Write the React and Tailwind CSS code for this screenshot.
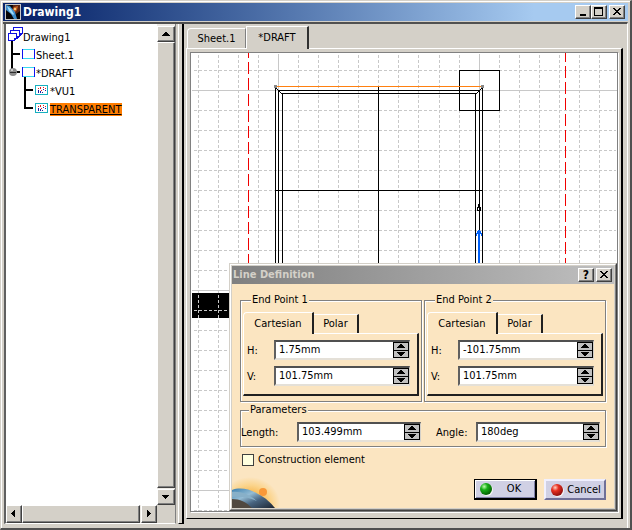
const raised =
  "border border-t-white border-l-white border-r-[#404040] border-b-[#404040] bg-[#d4d0c8] shadow-[inset_-1px_-1px_0_#808080]";

const range = (from, to, step) => {
  const out = [];
  for (let v = from; v <= to; v += step) out.push(v);
  return out;
};

function CaptionButton({ label, children }) {
  return (
    <button aria-label={label} className={`flex h-[14px] w-4 items-center justify-center ${raised}`}>
      <svg width="10" height="10" shapeRendering="crispEdges">{children}</svg>
    </button>
  );
}

const closeGlyph = (
  <path d="M1 1h2v1h1v1h2v-1h1v-1h2v1h-1v1h-1v1h-1v1h1v1h1v1h1v1h-2v-1h-1v-1h-2v1h-1v1h-2v-1h1v-1h1v-1h1v-1h-1v-1h-1v-1h-1z" />
);

function TitleBar() {
  return (
    <header className="mx-[2px] flex h-[18px] shrink-0 items-center bg-linear-to-r from-[#0a246a] from-5% to-[#a6caf0] to-85% pr-[3px] pl-[2px]">
      <svg width="16" height="16" viewBox="0 0 16 16" aria-hidden="true">
        <rect width="16" height="16" fill="#c8c8c8" />
        <rect x="1" y="1" width="14" height="14" fill="#080404" />
        <path d="M8 1h7v6l-4 3-4-4z" fill="#5a2410" />
        <path d="M9 3l4-1-1 4-3 3-2-2z" fill="#c86420" />
        <path d="M1 1l4 1 5 6 2 7h-3l-3-5-5-4z" fill="#3c8ccc" />
        <path d="M2 2l4 3 3 5-1 1-4-4z" fill="#a0dcf8" />
        <circle cx="10" cy="5" r="1" fill="#ffe8a0" />
      </svg>
      <h1 className="ml-[2px] flex-1 text-xs font-bold text-white">Drawing1</h1>
      <div className="flex">
        <CaptionButton label="Minimize"><rect x="2" y="7" width="6" height="2" /></CaptionButton>
        <CaptionButton label="Maximize"><path fillRule="evenodd" d="M0 0h9v9h-9zM1 2v6h7v-6z" /></CaptionButton>
        <span className="w-[2px]" />
        <CaptionButton label="Close">{closeGlyph}</CaptionButton>
      </div>
    </header>
  );
}

function SheetIcon({ x, y, view }) {
  return (
    <g transform={`translate(${x} ${y})`}>
      <rect width="13" height="10" fill="#fff" />
      <path d="M0 0h13v1h-13zM0 9h13v1h-13z" fill="#38d8f0" />
      <path d="M0 0h1v10h-1zM12 0h1v10h-1z" fill="#1010f0" />
      {view && (
        <>
          <path d="M0 0h13v1h-13zM0 9h13v1h-13zM0 1h1v8h-1zM12 1h1v8h-1z" fill="#18b0c0" />
          <path d="M3 3h1v1h-1zM5 2h1v2h-1zM8 2h1v1h-1zM10 3h1v1h-1zM6 5h1v1h-1z" fill="#e02020" />
          <path d="M3 5h1v3h-1zM5 6h1v2h-1zM8 4h1v1h-1zM7 7h1v1h-1zM10 5h1v1h-1z" fill="#2020a0" />
        </>
      )}
    </g>
  );
}

function TreeRow({ width, icon, children }) {
  return (
    <li className="flex h-[18px] items-center">
      <svg className={`${width} h-[18px] shrink-0 overflow-visible`} shapeRendering="crispEdges" aria-hidden="true">{icon}</svg>
      <span className="pt-[2px]">{children}</span>
    </li>
  );
}

function Tree() {
  return (
    <ul className="flex-1 bg-white pt-1">
      <TreeRow
        width="w-[17px]"
        icon={
          <>
            <rect x="5" y="12" width="2" height="6" />
            <g fill="#fff" stroke="#1010e0">
              <path d="M7.500 -.5h9v6l-2 2h-7z" />
              <path d="M4.500 2.500h9v6l-2 2h-7z" />
              <path d="M2.500 5.500h8v5l-2 2h-6z" />
              <path d="M16.500 5.500h-2v2M13.500 8.500h-2v2M10.500 10.500h-2v2" fill="none" />
            </g>
          </>
        }
      >
        Drawing1
      </TreeRow>
      <TreeRow
        width="w-[30px]"
        icon={
          <>
            <path d="M5 0h2v18h-2zM7 7h7v2h-7z" />
            <SheetIcon x={16} y={3} />
          </>
        }
      >
        Sheet.1
      </TreeRow>
      <TreeRow
        width="w-[30px]"
        icon={
          <>
            <path d="M5 0h2v6h-2zM7 7h7v2h-7zM18 13h2v5h-2z" />
            <circle cx="7" cy="8" r="4" fill="#8c8c8c" shapeRendering="auto" />
            <circle cx="6" cy="6" r="1" fill="#e0e0e0" shapeRendering="auto" />
            <rect x="4" y="8" width="6" height="1" fill="#303030" />
            <SheetIcon x={16} y={3} />
          </>
        }
      >
        *DRAFT
      </TreeRow>
      <TreeRow
        width="w-[44px]"
        icon={
          <>
            <path d="M18 0h2v18h-2zM20 7h7v2h-7z" />
            <SheetIcon x={29} y={3} view />
          </>
        }
      >
        *VU1
      </TreeRow>
      <TreeRow
        width="w-[44px]"
        icon={
          <>
            <path d="M18 0h2v9h-2zM20 7h7v2h-7z" />
            <SheetIcon x={29} y={3} view />
          </>
        }
      >
        <span className="bg-[#ff7d00] underline underline-offset-1">TRANSPARENT</span>
      </TreeRow>
    </ul>
  );
}

function ScrollButton({ label, d, size }) {
  return (
    <button aria-label={label} className={`flex shrink-0 items-center justify-center ${size} ${raised}`}>
      <svg width="8" height="8" shapeRendering="crispEdges"><path d={d} /></svg>
    </button>
  );
}

function TreePanel() {
  return (
    <aside className="mb-[4px] ml-px flex w-[172px] shrink-0 flex-col border-r border-b border-l-2 border-r-[#808080] border-b-white border-l-[#606060]">
      <div className="flex min-h-0 flex-1">
        <Tree />
        <div className="flex w-[18px] flex-col bg-[#ece9e4] pt-[2px]">
          <ScrollButton label="Scroll up" d="M3 2h2v1h1v1h1v1h1v1h-8v-1h1v-1h1v-1h1z" size="h-4" />
          <div className={`mb-px flex-1 ${raised}`} />
          <ScrollButton label="Scroll down" d="M0 2h7v1h-1v1h-1v1h-1v1h-1v-1h-1v-1h-1v-1h-1z" size="h-4" />
        </div>
      </div>
      <div className="flex h-[18px] bg-[#ece9e4]">
        <ScrollButton label="Scroll left" d="M5 0v7h-1v-1h-1v-1h-1v-1h-1v-1h1v-1h1v-1h1v-1z" size="w-4" />
        <div className={`mr-px flex-1 ${raised}`} />
        <ScrollButton label="Scroll right" d="M2 0v7h1v-1h1v-1h1v-1h1v-1h-1v-1h-1v-1h-1v-1z" size="w-4" />
        <div className="w-[18px] bg-[#d4d0c8]" />
      </div>
    </aside>
  );
}

function Drawing() {
  return (
    <svg className="absolute inset-0 h-full w-full" shapeRendering="crispEdges" role="img" aria-label="Draft drawing">
      <g transform="translate(-191 -53)">
        <rect x="192" y="293" width="60" height="25" />
        <g stroke="#c8c8c8" strokeDasharray="3 2">
          {[...range(198, 418, 20), ...range(439, 599, 20)].map((x) => (
            <line key={x} x1={x + 0.5} x2={x + 0.5} y1="55" y2="511" />
          ))}
          {range(70, 510, 20).map((y) => (
            <line key={y} x1="194" x2="616" y1={y + 0.5} y2={y + 0.5} />
          ))}
        </g>
        <path d="M278.500 54V91M479.500 54V91M192 90.500H617M192 290.500H617M192 490.500H617" stroke="#c8c8c8" />
        <path d="M248.500 46V263M565.500 50V263" stroke="#f00000" strokeDasharray="12 4" />
        <g fill="none" stroke="#000">
          <path d="M275.500 88V270M278.500 90V270M282.500 93V270M475.500 93V270M479.500 90V270M482.500 88V270" />
          <path d="M278 90.500H480M282 93.500H476M378.500 87V270M276 190.500H483M275 87l7 7M483 87l-7 7" />
          <rect x="459.500" y="70.500" width="40" height="40" />
          <path d="M477.500 210.500v-3h1v-3h1v3h1v3z" />
        </g>
        <path d="M275 86.500H483" stroke="#ff8010" />
        <path d="M274 85h3v3h-3zM481 85h3v3h-3z" fill="#888" />
        <path d="M478 270v-36h-1v2h-1v-3h1v-2h1v-1h2v1h1v2h1v3h-1v-2h-1v36z" fill="#0060f8" />
      </g>
    </svg>
  );
}

function SpinField({ id, value }) {
  return (
    <div className="flex h-5 min-w-0 flex-1 border-t-2 border-r border-b-2 border-l-2 border-t-[#505050] border-r-[#d4d0c8] border-b-[#e4e0d8] border-l-[#606060] bg-white">
      <input id={id} defaultValue={value} className="w-0 min-w-0 flex-1 bg-transparent pb-px pl-[3px] leading-3 outline-none" />
      <div className="flex w-4 flex-col border border-black bg-[#c0c0c0]">
        <button aria-label="Increase" className="flex flex-1 items-center justify-center border-b border-black">
          <svg width="8" height="4" shapeRendering="crispEdges"><path d="M3 0h2v1h1v1h1v1h1v1h-8v-1h1v-1h1v-1h1z" /></svg>
        </button>
        <button aria-label="Decrease" className="flex flex-1 items-center justify-center">
          <svg width="8" height="4" shapeRendering="crispEdges"><path d="M0 0h8v1h-1v1h-1v1h-1v1h-2v-1h-1v-1h-1v-1h-1z" /></svg>
        </button>
      </div>
    </div>
  );
}

function Group({ title, className, children }) {
  return (
    <fieldset className={`min-w-0 border border-[#808080] shadow-[1px_1px_0_#fff,inset_1px_1px_0_#fff] ${className}`}>
      <legend className="ml-2 h-[14px] bg-[#fbe5c1] px-px leading-[14px]">{title}</legend>
      {children}
    </fieldset>
  );
}

function EndPoint({ n, h, v }) {
  return (
    <Group title={`End Point ${n}`} className="px-[2px] pt-[5px] pb-[5px]">
      <div role="tablist" className="flex items-end">
        <button role="tab" aria-selected="true" className="relative z-10 -mb-px h-[22px] w-[71px] rounded-tl-sm border-t border-r-2 border-l border-t-white border-r-[#202020] border-l-white bg-[#fbe5c1]">
          Cartesian
        </button>
        <button role="tab" aria-selected="false" className="h-[19px] w-[45px] border-t border-r-2 border-t-white border-r-[#202020]">
          Polar
        </button>
      </div>
      <div className="flex flex-col gap-[6px] border-t border-r-2 border-b-2 border-l border-t-white border-r-[#202020] border-b-[#202020] border-l-white pt-[6px] pr-[7px] pb-2 pl-[3px]">
        <div className="flex">
          <label htmlFor={`h${n}`} className="w-[27px] pt-[5px] leading-3">H:</label>
          <SpinField id={`h${n}`} value={h} />
        </div>
        <div className="flex">
          <label htmlFor={`v${n}`} className="w-[27px] pt-[5px] leading-3">V:</label>
          <SpinField id={`v${n}`} value={v} />
        </div>
      </div>
    </Group>
  );
}

function ActionButton({ label, gradient, stops, rim }) {
  return (
    <button className={`flex h-[21px] items-center bg-[#d0d0e4] ${rim}`}>
      <svg width="14" height="14" className="ml-1 shrink-0" aria-hidden="true">
        <radialGradient id={gradient} cx="0.35" cy="0.3" r="0.7">
          <stop offset="0" stopColor={stops[0]} />
          <stop offset="0.4" stopColor={stops[1]} />
          <stop offset="1" stopColor={stops[2]} />
        </radialGradient>
        <circle cx="8" cy="8" r="6" fill="#f4f4f4" />
        <circle cx="7" cy="7" r="6" fill={`url(#${gradient})`} />
      </svg>
      <span className="flex-1 text-center">{label}</span>
    </button>
  );
}

function LineDialog() {
  return (
    <section
      role="dialog"
      aria-label="Line Definition"
      className="absolute top-[210px] right-0 left-[38px] border border-t-[#d4d0c8] border-r-[#404040] border-b-[#404040] border-l-[#d4d0c8]"
    >
      <div className="border border-t-white border-r-[#808080] border-b-[#808080] border-l-white bg-[#d4d0c8] p-px">
        <header className="flex h-[18px] items-center bg-linear-to-r from-[#808080] to-[#c0c0c0] pr-[2px] pl-px">
          <h2 className="flex-1 font-bold text-[#d4d0c8]">Line Definition</h2>
          <div className="flex gap-[2px]">
            <button aria-label="Help" className={`flex h-[14px] w-4 items-center justify-center text-xs leading-3 font-bold ${raised}`}>?</button>
            <CaptionButton label="Close">{closeGlyph}</CaptionButton>
          </div>
        </header>
        <form className="relative bg-[#fbe5c1] px-2 pt-[9px] pb-2" onSubmit={(e) => e.preventDefault()}>
          <svg className="absolute bottom-0 left-0" width="50" height="36" viewBox="0 0 50 36" aria-hidden="true">
            <defs>
              <radialGradient id="glow">
                <stop offset="0.4" stopColor="#f8b850" />
                <stop offset="0.7" stopColor="#fbd48c" />
                <stop offset="1" stopColor="#fbe5c1" />
              </radialGradient>
              <linearGradient id="earth" x1="0" y1="0" x2="1" y2="1">
                <stop offset="0" stopColor="#3c80b0" />
                <stop offset="0.35" stopColor="#94bcd4" />
                <stop offset="0.6" stopColor="#486480" />
                <stop offset="1" stopColor="#1c2430" />
              </linearGradient>
            </defs>
            <ellipse cx="18" cy="32" rx="30" ry="27" fill="url(#glow)" />
            <circle cx="31" cy="20" r="4" fill="#f89838" />
            <path d="M0 18c8-3 18-1 26 4 8 4 13 9 17 14H0z" fill="url(#earth)" />
            <path d="M0 20c9-1 18 3 25 9-8-4-16-5-25-4z" fill="#88b0c8" />
            <path d="M0 27c8 0 14 3 20 9H0z" fill="#504840" />
          </svg>
          <div className="grid grid-cols-2 gap-[2px]">
            <EndPoint n="1" h="1.75mm" v="101.75mm" />
            <EndPoint n="2" h="-101.75mm" v="101.75mm" />
          </div>
          <Group title="Parameters" className="mt-px pt-[5px] pb-1">
            <div className="flex pr-[5px]">
              <label htmlFor="length" className="w-14 pt-[5px] leading-3">Length:</label>
              <SpinField id="length" value="103.499mm" />
              <label htmlFor="angle" className="ml-[15px] w-10 pt-[5px] leading-3">Angle:</label>
              <SpinField id="angle" value="180deg" />
            </div>
          </Group>
          <label className="mt-[7px] ml-[2px] flex h-3 w-fit items-center gap-1">
            <input type="checkbox" className="size-3 appearance-none border border-[#404040] bg-[#ffffe0]" />
            Construction element
          </label>
          <div className="relative mt-[13px] flex justify-end gap-[7px]">
            <ActionButton
              label="OK"
              gradient="green"
              stops={["#c0ffb0", "#18b018", "#046004"]}
              rim="w-[63px] border border-r-2 border-b-2 border-black shadow-[inset_1px_1px_0_#fff,inset_-1px_-1px_0_#8080a8]"
            />
            <ActionButton
              label="Cancel"
              gradient="red"
              stops={["#ffd0c0", "#e83020", "#901010"]}
              rim="w-[62px] border-2 border-t-[#f0f0ff] border-l-[#f0f0ff] border-r-[#707098] border-b-[#707098]"
            />
          </div>
        </form>
      </div>
    </section>
  );
}

export default function App() {
  return (
    <div className="flex h-screen min-h-[530px] w-full flex-col border-t border-r-2 border-b-2 border-l border-t-[#d4d0c8] border-r-[#505050] border-b-[#505050] border-l-[#d4d0c8] bg-[#d4d0c8] pt-[2px] font-['DejaVu_Sans_Condensed','DejaVu_Sans',sans-serif] text-[11px] leading-[14px] text-black shadow-[inset_1px_1px_0_#fff]">
      <TitleBar />
      <main className="mx-[2px] mt-px flex min-h-0 flex-1 border-t-2 border-r border-t-[#505050] border-r-white">
        <TreePanel />
        <div className="mb-[4px] ml-[2px] w-[6px] shrink-0 border-r-2 border-b border-l border-r-black border-b-black border-l-white" />
        <div className="mr-[4px] mb-[9px] ml-[2px] flex min-w-0 flex-1 flex-col">
          <div role="tablist" className="flex shrink-0 items-end pt-[2px] pl-px">
            <button role="tab" aria-selected="false" className="h-[20px] w-[59px] rounded-tl-sm border-t border-r border-l border-t-white border-r-[#808080] border-l-white">
              Sheet.1
            </button>
            <button role="tab" aria-selected="true" className="relative z-10 -mb-px h-[23px] w-[63px] border-t border-r-2 border-l border-t-white border-r-[#303030] border-l-white bg-[#d4d0c8]">
              *DRAFT
            </button>
          </div>
          <div className="flex min-h-0 flex-1 border-t border-r-2 border-b border-l border-t-white border-r-black border-b-black border-l-white px-[3px] pt-[3px] pb-[6px]">
            <div className="relative flex-1 border border-[#808080] bg-white shadow-[1px_1px_0_#fff]">
              <Drawing />
              <LineDialog />
            </div>
          </div>
        </div>
      </main>
    </div>
  );
}
